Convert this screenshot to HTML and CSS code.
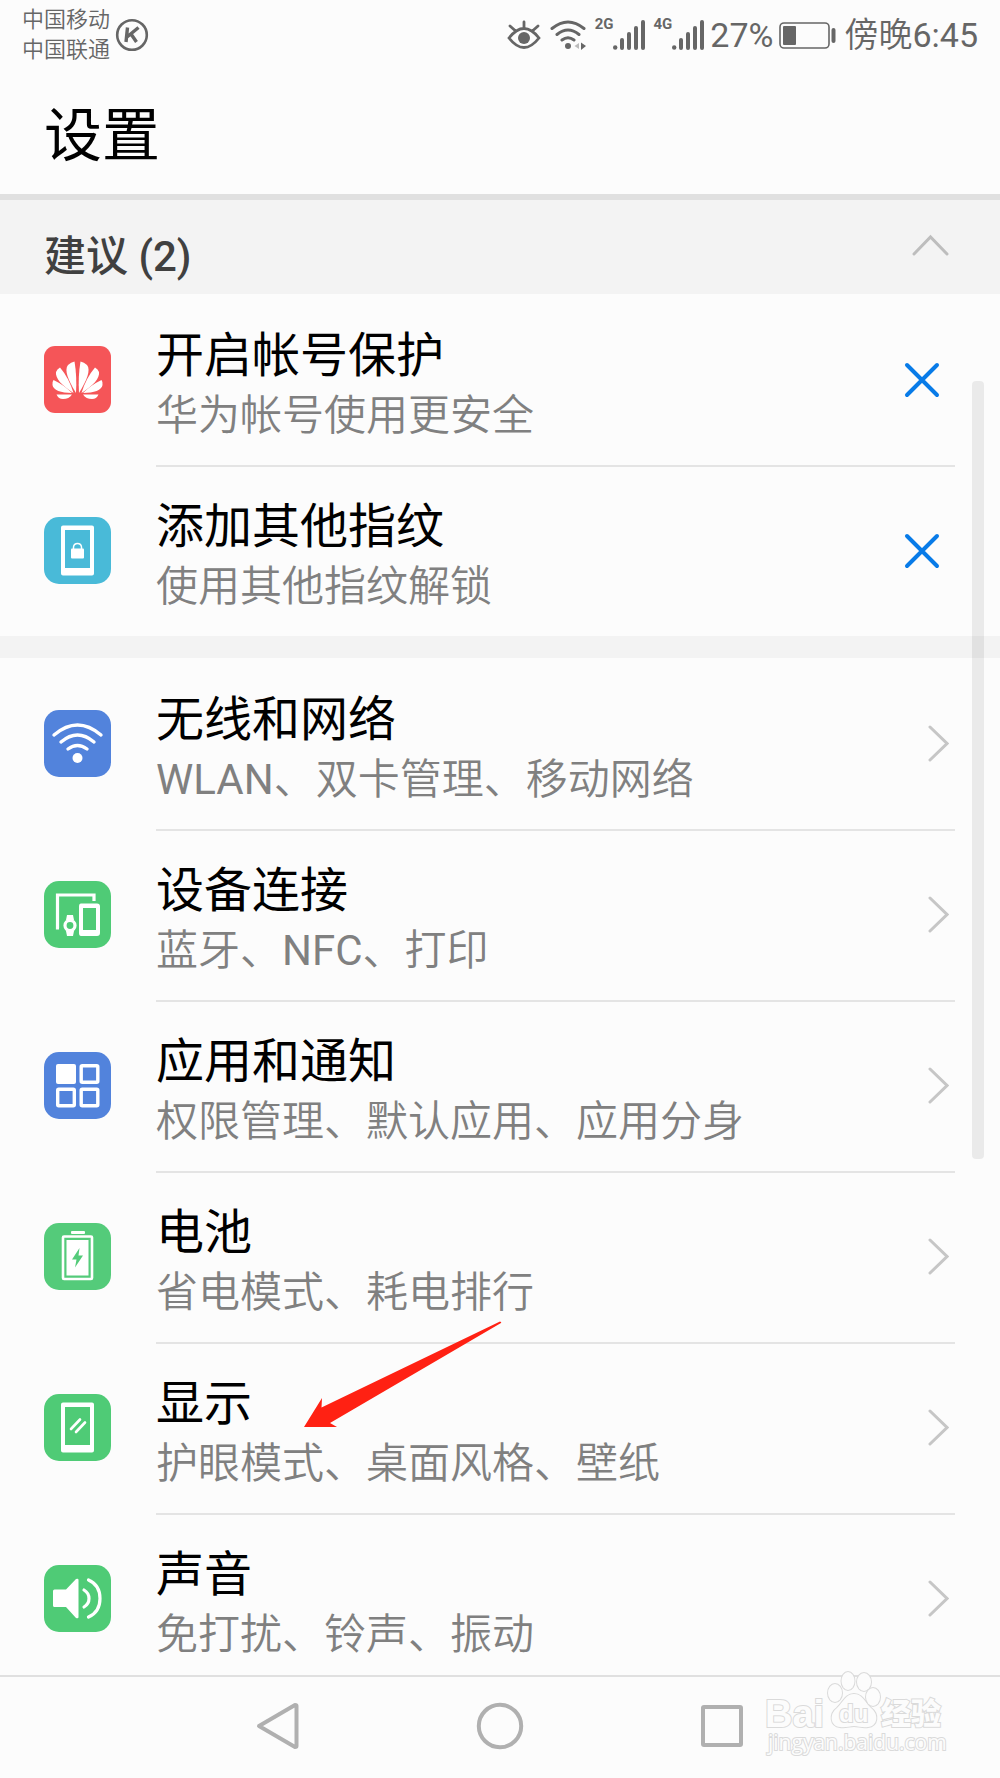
FILE: index.html
```html
<!DOCTYPE html>
<html lang="zh-CN">
<head>
<meta charset="utf-8">
<meta name="viewport" content="width=device-width, initial-scale=1">
<title>设置</title>
<link rel="stylesheet" href="styles.css">
</head>
<body>
<div class="app">
  <header class="header">
    <div class="status">
      <div class="carriers"><span>中国移动</span><span>中国联通</span></div>
      <svg class="k-badge" width="34" height="34" viewBox="0 0 34 34" fill="none" stroke="#666">
        <circle cx="17" cy="17" r="14.8" stroke-width="2.6"/>
        <path d="M12.500 9.500L11 24M23.500 9.500L12 19M16 16L21.500 24" stroke-width="3.400"/>
      </svg>
      <div class="indicators">
        <svg width="34" height="30" viewBox="0 0 34 30" fill="none" stroke="#666" stroke-width="2.800" stroke-linecap="round">
          <path d="M2 18Q17 -1 32 18Q17 37 2 18ZM17 7V2M7.500 10L3 6M26.500 10L31 6"/>
          <circle cx="17" cy="18" r="6" fill="#666" stroke="none"/>
        </svg>
        <svg class="wifi" width="38" height="30" viewBox="0 0 38 30" fill="none" stroke="#666" stroke-width="3" stroke-linecap="round">
          <path d="M3 8.500Q19 -4.500 35 8.500M8 14.500Q19 5.500 30 14.500M13 20Q19 15.500 25 20"/>
          <circle cx="19" cy="26" r="3" fill="#666" stroke="none"/>
          <path d="M32 22.500V30L37 26Z" fill="#666" stroke="none"/>
          <path d="M30 23V29L25.500 26Z" fill="#bbb" stroke="none"/>
        </svg>
        <span class="net">2G</span>
        <svg class="bars" width="32" height="30" viewBox="0 0 32 30" fill="#666">
          <circle cx="2.200" cy="27.500" r="2.200"/><rect x="7" y="18" width="4" height="12" rx="2"/><rect x="14" y="12" width="4" height="18" rx="2"/><rect x="21" y="6" width="4" height="24" rx="2"/><rect x="28" width="4" height="30" rx="2"/>
        </svg>
        <span class="net second">4G</span>
        <svg class="bars" width="32" height="30" viewBox="0 0 32 30" fill="#666">
          <circle cx="2.200" cy="27.500" r="2.200"/><rect x="7" y="18" width="4" height="12" rx="2"/><rect x="14" y="12" width="4" height="18" rx="2"/><rect x="21" y="6" width="4" height="24" rx="2"/><rect x="28" width="4" height="30" rx="2"/>
        </svg>
        <span class="percent">27%</span>
        <svg class="battery" width="57" height="27" viewBox="0 0 57 27">
          <rect x="1" y="1" width="49" height="25" rx="4" fill="none" stroke="#666" stroke-width="1.600"/>
          <rect x="4" y="4" width="13" height="19" rx="1" fill="#666"/>
          <rect x="52.500" y="6" width="4" height="15" rx="2" fill="#666"/>
        </svg>
        <time>傍晚6:45</time>
      </div>
    </div>
    <h1>设置</h1>
  </header>

  <main class="content">
    <button class="section" type="button" aria-expanded="true">
      <span>建议 (2)</span>
      <svg width="37" height="22" viewBox="0 0 37 22" fill="none" stroke="#bdbdbd" stroke-width="3" stroke-linecap="round"><path d="M2 20L18.500 3L35 20"/></svg>
    </button>
    <ul class="list">
      <li class="row">
        <svg class="icon" viewBox="0 0 67 67">
          <rect width="67" height="67" rx="11" fill="#f55558"/>
          <g fill="#fff">
            <path d="M32 47C24 34 20 24 24 19Q27 16 30.500 15.500Q33 30 32 47Z"/>
            <path d="M29.500 47C18 40 11 32 12 26Q13 23 16 21.500Q25 32 29.500 47Z"/>
            <path d="M28 47C17 47 9 44 8.500 39Q8 36 9.500 34Q20 39 28 47Z"/>
            <path d="M28 48.500Q25 53 19 53Q14.500 53 12.500 48.500Z"/>
            <path d="M35 47C43 34 47 24 43 19Q40 16 36.500 15.500Q34 30 35 47Z"/>
            <path d="M37.500 47C49 40 56 32 55 26Q54 23 51 21.500Q42 32 37.500 47Z"/>
            <path d="M39 47C50 47 58 44 58.500 39Q59 36 57.500 34Q47 39 39 47Z"/>
            <path d="M39 48.500Q42 53 48 53Q52.500 53 54.500 48.500Z"/>
          </g>
        </svg>
        <div class="text"><h2>开启帐号保护</h2><p>华为帐号使用更安全</p></div>
        <button class="close" type="button" aria-label="关闭"><svg width="36" height="36" viewBox="0 0 36 36"><path d="M3 3L33 33M33 3L3 33"/></svg></button>
      </li>
      <li class="row">
        <svg class="icon" viewBox="0 0 67 67">
          <rect width="67" height="67" rx="15" fill="#49bad8"/>
          <path d="M19 8.500H48Q50 8.500 50 10.500V56.500Q50 58.500 48 58.500H19Q17 58.500 17 56.500V10.500Q17 8.500 19 8.500ZM21 13V51H46V13Z" fill="#fff" fill-rule="evenodd"/>
          <rect x="27" y="31.500" width="13" height="10" rx="1" fill="#fff"/><path d="M29.500 32V30Q30 26.500 33.500 26.500T37.500 30V32" fill="none" stroke="#fff" stroke-width="1.500"/>
        </svg>
        <div class="text"><h2>添加其他指纹</h2><p>使用其他指纹解锁</p></div>
        <button class="close" type="button" aria-label="关闭"><svg width="36" height="36" viewBox="0 0 36 36"><path d="M3 3L33 33M33 3L3 33"/></svg></button>
      </li>
    </ul>
    <ul class="list settings">
      <li><a class="row" href="#wireless">
        <svg class="icon" viewBox="0 0 67 67">
          <rect width="67" height="67" rx="15" fill="#5283dc"/>
          <g fill="none" stroke="#fff" stroke-width="3.400" stroke-linecap="round"><path d="M10 25Q33.500 5 57 25M17 32Q33.500 18 50 32M24 39Q33.500 32 43 39"/></g><circle cx="33.500" cy="48" r="5" fill="#fff"/>
        </svg>
        <span class="text"><span class="title">无线和网络</span><span class="sub">WLAN、双卡管理、移动网络</span></span>
        <svg class="chevron" width="21" height="37" viewBox="0 0 21 37"><path d="M2 2L19 18.500L2 35"/></svg>
      </a></li>
      <li><a class="row" href="#devices">
        <svg class="icon" viewBox="0 0 67 67">
          <rect width="67" height="67" rx="15" fill="#4fcb76"/>
          <path d="M15 47H13.500V14H50V20" fill="none" stroke="#fff" stroke-width="3.200"/>
          <path d="M37 22.500H53Q56 22.500 56 25.500V52Q56 55 53 55H37Q35 55 35 52V25.500Q35 22.500 37 22.500ZM39 27V49H52V27Z" fill="#fff" fill-rule="evenodd"/>
          <circle cx="26" cy="44.500" r="5" fill="none" stroke="#fff" stroke-width="3.200"/><path d="M23 34H29L30 39H22ZM22 50H30L29 55H23Z" fill="#fff"/>
        </svg>
        <span class="text"><span class="title">设备连接</span><span class="sub">蓝牙、NFC、打印</span></span>
        <svg class="chevron" width="21" height="37" viewBox="0 0 21 37"><path d="M2 2L19 18.500L2 35"/></svg>
      </a></li>
      <li><a class="row" href="#apps">
        <svg class="icon" viewBox="0 0 67 67">
          <rect width="67" height="67" rx="15" fill="#5283dc"/>
          <rect x="12" y="12" width="20" height="20" rx="2" fill="#fff"/>
          <g fill="none" stroke="#fff" stroke-width="3.400"><rect x="37.200" y="13.700" width="16.600" height="16.600" rx="1"/><rect x="13.700" y="37.200" width="16.600" height="16.600" rx="1"/><rect x="37.200" y="37.200" width="16.600" height="16.600" rx="1"/></g>
        </svg>
        <span class="text"><span class="title">应用和通知</span><span class="sub">权限管理、默认应用、应用分身</span></span>
        <svg class="chevron" width="21" height="37" viewBox="0 0 21 37"><path d="M2 2L19 18.500L2 35"/></svg>
      </a></li>
      <li><a class="row" href="#battery">
        <svg class="icon" viewBox="0 0 67 67">
          <rect width="67" height="67" rx="15" fill="#54cb7a"/>
          <rect x="27" y="8" width="14" height="3" rx="1" fill="#fff"/>
          <rect x="19" y="13.500" width="29" height="42.500" rx="1" fill="none" stroke="#fff" stroke-width="2.600"/>
          <rect x="22.500" y="17" width="22" height="35.500" fill="#fff"/>
          <path d="M35.500 25L28 36.500H32.500L31 44.500L39 32.500H34.500Z" fill="#54cb7a"/>
        </svg>
        <span class="text"><span class="title">电池</span><span class="sub">省电模式、耗电排行</span></span>
        <svg class="chevron" width="21" height="37" viewBox="0 0 21 37"><path d="M2 2L19 18.500L2 35"/></svg>
      </a></li>
      <li><a class="row" href="#display">
        <svg class="icon" viewBox="0 0 67 67">
          <rect width="67" height="67" rx="15" fill="#4fcb76"/>
          <path d="M19 8.500H48Q50 8.500 50 10.500V56.500Q50 58.500 48 58.500H19Q17 58.500 17 56.500V10.500Q17 8.500 19 8.500ZM21 13V51H46V13Z" fill="#fff" fill-rule="evenodd"/>
          <path d="M27 35L36 25.500M32 38L41 28.500" stroke="#fff" stroke-width="2.600" stroke-linecap="round"/>
        </svg>
        <span class="text"><span class="title">显示</span><span class="sub">护眼模式、桌面风格、壁纸</span></span>
        <svg class="chevron" width="21" height="37" viewBox="0 0 21 37"><path d="M2 2L19 18.500L2 35"/></svg>
        <svg class="pointer" width="198" height="107" viewBox="0 0 198 107"><path d="M0 106L18 77L17.500 86.500L196 .500Q198 1 197 2L26 102L33 106Z" fill="#ff2113"/></svg>
      </a></li>
      <li><a class="row" href="#sound">
        <svg class="icon" viewBox="0 0 67 67">
          <rect width="67" height="67" rx="15" fill="#4fcb76"/>
          <path d="M10.500 24.500H22L32 14Q34.500 13 34.500 15V52Q34.500 54 32 53L22 42H10.500Q9 42 9 40.500V26Q9 24.500 10.500 24.500Z" fill="#fff"/>
          <path d="M40 25Q45 28 45 33.500T40 42M44.500 15Q56 20 56 33.500T44.500 52" fill="none" stroke="#fff" stroke-width="3.200" stroke-linecap="round"/>
        </svg>
        <span class="text"><span class="title">声音</span><span class="sub">免打扰、铃声、振动</span></span>
        <svg class="chevron" width="21" height="37" viewBox="0 0 21 37"><path d="M2 2L19 18.500L2 35"/></svg>
      </a></li>
    </ul>
  </main>
  <div class="scroll-thumb"></div>

  <nav class="nav">
    <button type="button" aria-label="返回"><svg width="48" height="48" viewBox="0 0 48 48"><path d="M5 24L41 3Q42.500 3 42.500 4V44Q42.500 45 41 45Z"/></svg></button>
    <button type="button" aria-label="主页"><svg width="48" height="48" viewBox="0 0 48 48"><circle cx="24" cy="24" r="21.200"/></svg></button>
    <button type="button" aria-label="最近任务"><svg width="48" height="48" viewBox="0 0 48 48"><rect x="5" y="5" width="38" height="38" rx="1"/></svg></button>
    <svg class="watermark" width="190" height="96" viewBox="0 0 190 96">
      <g class="outline">
        <text class="brand" x="5" y="56">Bai</text>
        <path d="M94 23C86 23 83 31 77 37C69 43 70 55 80 56C85 57 90 55 94 55S103 57 108 56C118 55 119 43 111 37C105 31 102 23 94 23Z"/>
        <ellipse cx="75" cy="22" rx="7" ry="9"/><ellipse cx="88" cy="10" rx="6.500" ry="9"/><ellipse cx="104" cy="11" rx="7" ry="9"/><ellipse cx="113" cy="26" rx="7" ry="9"/>
        <text class="du" x="79" y="51">du</text>
        <text class="cn" x="121" y="53">经验</text>
        <text class="url" x="8" y="79">jingyan.baidu.com</text>
      </g>
    </svg>
  </nav>
</div>
</body>
</html>
```
FILE: styles.css
```css
* { box-sizing: border-box; }

body {
  margin: 0;
  background: #fcfcfc;
  color: #000;
  font-family: Roboto, "Noto Sans CJK SC", sans-serif;
  font-weight: 400;
}

h1, h2, p, ul { margin: 0; padding: 0; font-weight: inherit; }
ul { list-style: none; }
svg { display: block; flex: none; }
button { border: 0; padding: 0; background: none; font: inherit; color: inherit; cursor: pointer; }

.app {
  position: relative;
  display: flex;
  flex-direction: column;
  height: 100vh;
}

.header { flex: none; border-bottom: 6px solid #e0e0e0; }

.status {
  display: flex;
  align-items: center;
  height: 68px;
  padding: 2px 22px 0;
  color: #666;
  font-family: Roboto, "Noto Sans CJK SC DemiLight", "Noto Sans CJK SC", sans-serif;
}
.carriers {
  display: flex;
  flex-direction: column;
  font-size: 22px;
  line-height: 30px;
}
.k-badge { margin-left: 5px; }
.indicators {
  display: flex;
  align-items: center;
  margin-left: auto;
  font-size: 34px;
  line-height: 40px;
}
.wifi { margin-left: 8px; }
.net {
  align-self: flex-start;
  margin-left: 8px;
  font-size: 15px;
  line-height: 18px;
  font-weight: 700;
}
.percent { margin-left: 6px; }
.battery { margin: 0 8px 0 6px; }

.header h1 {
  padding: 28px 44px 18px;
  font-size: 58px;
  line-height: 80px;
}

.content { position: relative; flex: 1; min-height: 0; overflow: hidden; }

.section {
  display: flex;
  align-items: center;
  justify-content: space-between;
  width: 100%;
  height: 94px;
  padding: 20px 51px 0 44px;
  background: #f3f3f3;
  color: #404040;
  font-size: 42px;
  line-height: 60px;
  font-weight: 500;
}
.section svg { margin-bottom: 24px; }

.row {
  position: relative;
  display: flex;
  align-items: center;
  gap: 45px;
  height: 171px;
  padding: 0 45px 0 44px;
  color: inherit;
  text-decoration: none;
}
.row::after {
  content: "";
  position: absolute;
  right: 45px;
  bottom: -2px;
  left: 156px;
  height: 2px;
  background: #e4e4e4;
}
.list:not(.settings) .row:last-child::after { content: none; }
.icon { width: 67px; height: 67px; }
.text { flex: 1; padding-top: 12px; }
.text h2, .title { display: block; font-size: 48px; line-height: 60px; }
.text p, .sub {
  display: block;
  color: #808080;
  font-family: Roboto, "Noto Sans CJK SC DemiLight", "Noto Sans CJK SC", sans-serif;
  font-size: 42px;
  line-height: 60px;
}

.close { margin-right: 15px; }
.close path { fill: none; stroke: #087be8; stroke-width: 4; stroke-linecap: round; }
.chevron { margin-right: 6px; }
.chevron path { fill: none; stroke: #c6c6c6; stroke-width: 3; stroke-linecap: round; }

.settings { border-top: 22px solid #f3f3f3; }

.pointer { position: absolute; top: -21px; left: 304px; z-index: 1; }

.scroll-thumb {
  position: absolute;
  top: 381px;
  right: 16px;
  width: 12px;
  height: 778px;
  border-radius: 4px;
  background: rgba(0, 0, 0, .07);
}

.nav {
  position: relative;
  flex: none;
  display: grid;
  grid-template-columns: repeat(3, 222px);
  justify-content: center;
  align-items: center;
  height: 103px;
  padding-bottom: 4px;
  border-top: 2px solid #e0e0e0;
  background: #fcfcfc;
}
.nav button { display: grid; place-items: center; height: 80px; }
.nav button svg { fill: none; stroke: #b0b0b0; stroke-width: 4; stroke-linejoin: round; }

.watermark { position: absolute; top: -6px; right: 50px; }
.outline { fill: #fcfcfc; stroke: #dadada; stroke-width: 2; paint-order: stroke; }
.brand { font: 700 38px "Liberation Sans", sans-serif; }
.du { font: 700 24px "Liberation Sans", sans-serif; }
.cn { font: 900 30px "Noto Sans CJK SC", sans-serif; }
.url { font: 400 21px "Open Sans", sans-serif; }
```
